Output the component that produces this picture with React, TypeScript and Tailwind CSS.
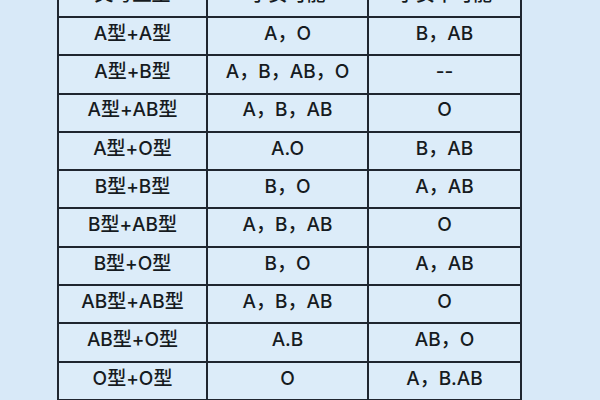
const rows: [string, string, string][] = [
  ['A型+A型', 'A，O', 'B，AB'],
  ['A型+B型', 'A，B，AB，O', '--'],
  ['A型+AB型', 'A，B，AB', 'O'],
  ['A型+O型', 'A.O', 'B，AB'],
  ['B型+B型', 'B，O', 'A，AB'],
  ['B型+AB型', 'A，B，AB', 'O'],
  ['B型+O型', 'B，O', 'A，AB'],
  ['AB型+AB型', 'A，B，AB', 'O'],
  ['AB型+O型', 'A.B', 'AB，O'],
  ['O型+O型', 'O', 'A，B.AB'],
];

export default function App() {
  return (
    <div
      className="w-[600px] h-[400px] overflow-hidden bg-[#d8e9f8] text-[#161b21]"
      style={{ fontFamily: 'Inter, "Noto Sans CJK SC", sans-serif' }}
    >
      <table className="ml-[57px] mt-[-24px] border-collapse border-2 border-[#1f2630] bg-[#dcecf9] text-[19px] font-medium text-center">
        <thead>
          <tr className="h-[40px]">
            <th className="w-[149px] border-2 border-[#1f2630] font-medium pb-[4px]">父母血型</th>
            <th className="w-[161px] border-2 border-[#1f2630] font-medium pb-[4px]">子女可能</th>
            <th className="w-[153px] border-2 border-[#1f2630] font-medium pb-[4px]">子女不可能</th>
          </tr>
        </thead>
        <tbody>
          {rows.map(([parents, may, mayNot]) => (
            <tr key={parents} className="h-[38.3px]">
              <td className="border-2 border-[#1f2630] p-0 pb-[4px]">{parents}</td>
              <td className="border-2 border-[#1f2630] p-0 pb-[4px]">{may}</td>
              <td className="border-2 border-[#1f2630] p-0 pb-[4px]">{mayNot}</td>
            </tr>
          ))}
        </tbody>
      </table>
    </div>
  );
}
